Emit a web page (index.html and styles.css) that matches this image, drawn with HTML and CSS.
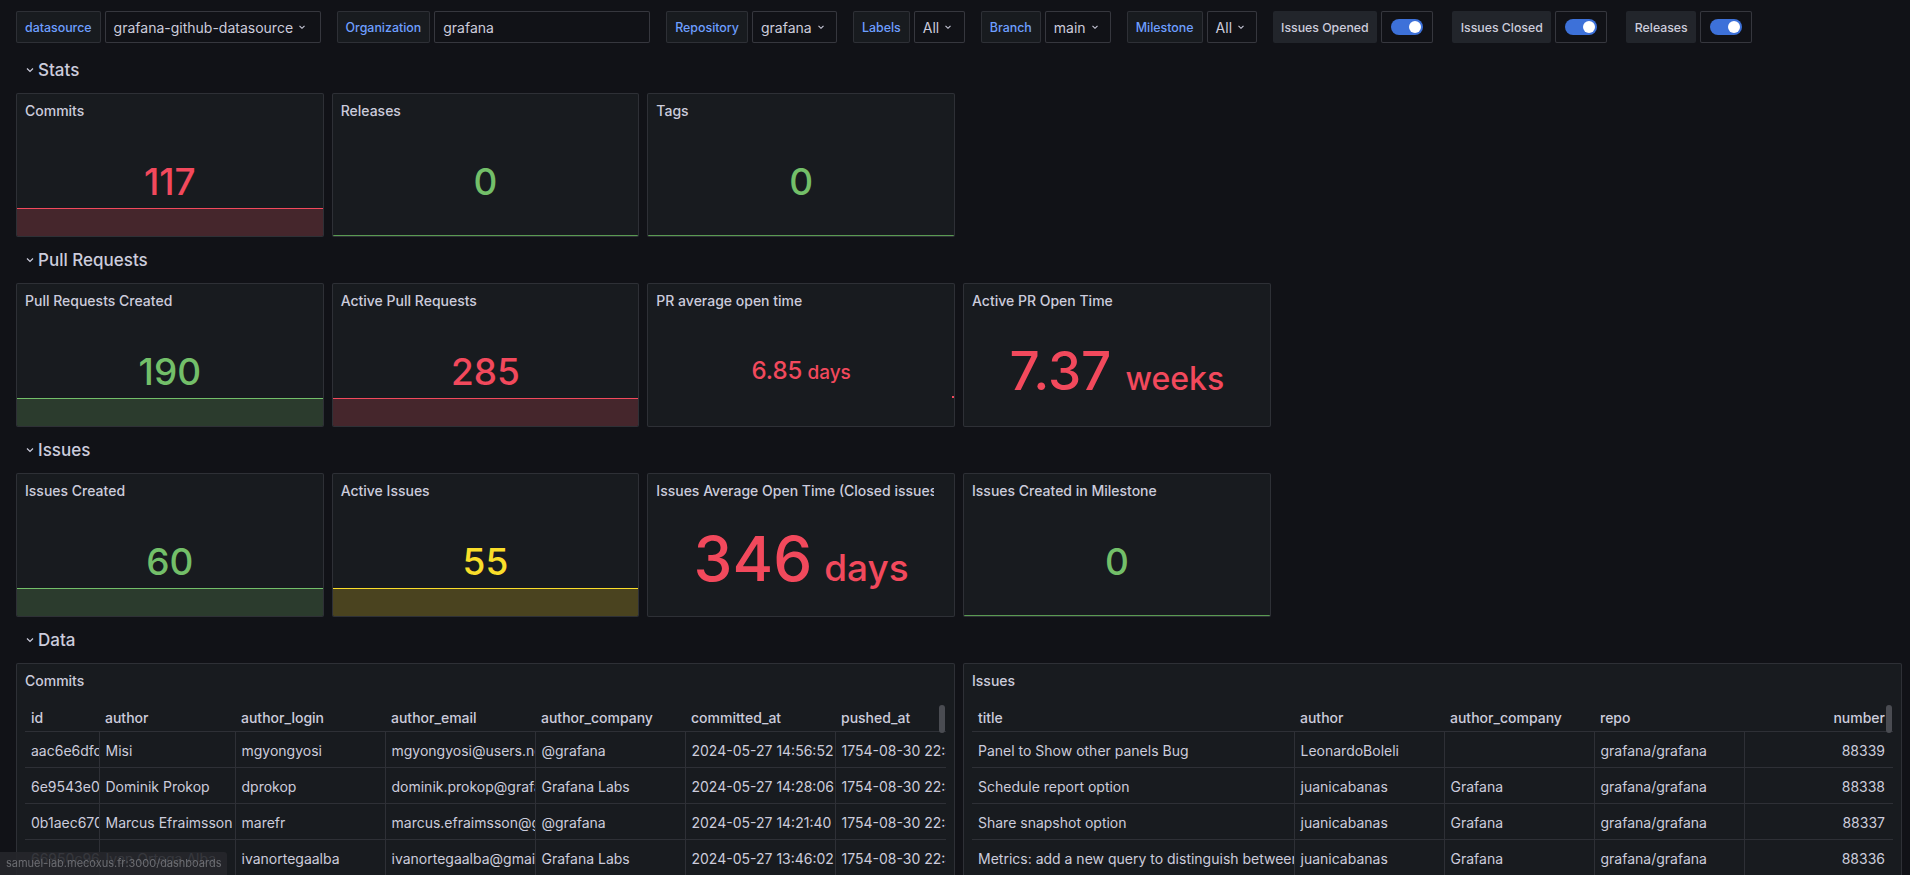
FILE: index.html
```html
<!DOCTYPE html>
<html>
<head>
<meta charset="utf-8">
<link rel="stylesheet" href="styles.css">
</head>
<body>
<div class="vars">
  <div class="vgroup"><span class="vlabel">datasource</span><span class="vselect w-ds">grafana-github-datasource<svg class="chev" viewBox="0 0 10 10"><path d="M2.5 3.8 L5 6.3 L7.5 3.8"/></svg></span></div>
  <div class="vgroup"><span class="vlabel">Organization</span><span class="vinput w-org">grafana</span></div>
  <div class="vgroup"><span class="vlabel">Repository</span><span class="vselect w-repo">grafana<svg class="chev" viewBox="0 0 10 10"><path d="M2.5 3.8 L5 6.3 L7.5 3.8"/></svg></span></div>
  <div class="vgroup"><span class="vlabel">Labels</span><span class="vselect w-all">All<svg class="chev" viewBox="0 0 10 10"><path d="M2.5 3.8 L5 6.3 L7.5 3.8"/></svg></span></div>
  <div class="vgroup"><span class="vlabel">Branch</span><span class="vselect w-main">main<svg class="chev" viewBox="0 0 10 10"><path d="M2.5 3.8 L5 6.3 L7.5 3.8"/></svg></span></div>
  <div class="vgroup"><span class="vlabel">Milestone</span><span class="vselect w-all2">All<svg class="chev" viewBox="0 0 10 10"><path d="M2.5 3.8 L5 6.3 L7.5 3.8"/></svg></span></div>
  <div class="vgroup"><span class="vlabel plain">Issues Opened</span><span class="vtoggle"><span class="sw"></span></span></div>
  <div class="vgroup tg"><span class="vlabel plain">Issues Closed</span><span class="vtoggle"><span class="sw"></span></span></div>
  <div class="vgroup tg"><span class="vlabel plain">Releases</span><span class="vtoggle"><span class="sw"></span></span></div>
</div>

<div class="dash">
  <div class="rowh"><svg class="rchev" viewBox="0 0 12 12"><path d="M3 4.5 L6 7.5 L9 4.5"/></svg><span>Stats</span></div>
  <div class="grid6">
    <div class="panel stat">
      <div class="ptitle">Commits</div>
      <div class="sbody"><div class="spark red"></div><div class="sval red">117</div></div>
    </div>
    <div class="panel stat">
      <div class="ptitle">Releases</div>
      <div class="sbody"><div class="spark line green"></div><div class="sval green">0</div></div>
    </div>
    <div class="panel stat">
      <div class="ptitle">Tags</div>
      <div class="sbody"><div class="spark line green"></div><div class="sval green">0</div></div>
    </div>
  </div>

  <div class="rowh"><svg class="rchev" viewBox="0 0 12 12"><path d="M3 4.5 L6 7.5 L9 4.5"/></svg><span>Pull Requests</span></div>
  <div class="grid6">
    <div class="panel stat">
      <div class="ptitle">Pull Requests Created</div>
      <div class="sbody"><div class="spark green"></div><div class="sval green">190</div></div>
    </div>
    <div class="panel stat">
      <div class="ptitle">Active Pull Requests</div>
      <div class="sbody"><div class="spark red"></div><div class="sval red">285</div></div>
    </div>
    <div class="panel stat">
      <div class="ptitle">PR average open time</div>
      <div class="sbody"><div class="dot"></div><div class="sval red small">6.85<span class="unit">days</span></div></div>
    </div>
    <div class="panel stat">
      <div class="ptitle">Active PR Open Time</div>
      <div class="sbody"><div class="sval red big">7.37<span class="unit">weeks</span></div></div>
    </div>
  </div>

  <div class="rowh"><svg class="rchev" viewBox="0 0 12 12"><path d="M3 4.5 L6 7.5 L9 4.5"/></svg><span>Issues</span></div>
  <div class="grid6">
    <div class="panel stat">
      <div class="ptitle">Issues Created</div>
      <div class="sbody"><div class="spark green"></div><div class="sval green">60</div></div>
    </div>
    <div class="panel stat">
      <div class="ptitle">Active Issues</div>
      <div class="sbody"><div class="spark yellow"></div><div class="sval yellow">55</div></div>
    </div>
    <div class="panel stat">
      <div class="ptitle clip">Issues Average Open Time (Closed issues)</div>
      <div class="sbody"><div class="sval red huge">346<span class="unit">days</span></div></div>
    </div>
    <div class="panel stat">
      <div class="ptitle">Issues Created in Milestone</div>
      <div class="sbody"><div class="spark line green"></div><div class="sval green">0</div></div>
    </div>
  </div>

  <div class="rowh"><svg class="rchev" viewBox="0 0 12 12"><path d="M3 4.5 L6 7.5 L9 4.5"/></svg><span>Data</span></div>
  <div class="grid2">
    <div class="panel tpanel">
      <div class="ptitle">Commits</div>
      <div class="twrap">
        <div class="thumb"></div>
        <table class="tbl commits">
          <colgroup><col style="width:74px"><col style="width:136px"><col style="width:150px"><col style="width:150px"><col style="width:150px"><col style="width:150px"><col></colgroup>
          <thead><tr><th>id</th><th>author</th><th>author_login</th><th>author_email</th><th>author_company</th><th>committed_at</th><th>pushed_at</th></tr></thead>
          <tbody>
            <tr><td>aac6e6dfc0a1</td><td>Misi</td><td>mgyongyosi</td><td>mgyongyosi@users.noreply.github.com</td><td>@grafana</td><td>2024-05-27 14:56:52</td><td>1754-08-30 22:43:41</td></tr>
            <tr><td>6e9543e0b7c2</td><td>Dominik Prokop</td><td>dprokop</td><td>dominik.prokop@grafana.com</td><td>Grafana Labs</td><td>2024-05-27 14:28:06</td><td>1754-08-30 22:43:41</td></tr>
            <tr><td>0b1aec670d3e</td><td>Marcus Efraimsson</td><td>marefr</td><td>marcus.efraimsson@gmail.com</td><td>@grafana</td><td>2024-05-27 14:21:40</td><td>1754-08-30 22:43:41</td></tr>
            <tr><td>66950c96a2f4</td><td>Ivan Ortega Alba</td><td>ivanortegaalba</td><td>ivanortegaalba@gmail.com</td><td>Grafana Labs</td><td>2024-05-27 13:46:02</td><td>1754-08-30 22:43:41</td></tr>
          </tbody>
        </table>
      </div>
    </div>
    <div class="panel tpanel">
      <div class="ptitle">Issues</div>
      <div class="twrap">
        <div class="thumb"></div>
        <table class="tbl issues">
          <colgroup><col style="width:322px"><col style="width:150px"><col style="width:150px"><col style="width:150px"><col></colgroup>
          <thead><tr><th>title</th><th>author</th><th>author_company</th><th>repo</th><th class="num">number</th></tr></thead>
          <tbody>
            <tr><td>Panel to Show other panels Bug</td><td>LeonardoBoleli</td><td></td><td>grafana/grafana</td><td class="num">88339</td></tr>
            <tr><td>Schedule report option</td><td>juanicabanas</td><td>Grafana</td><td>grafana/grafana</td><td class="num">88338</td></tr>
            <tr><td>Share snapshot option</td><td>juanicabanas</td><td>Grafana</td><td>grafana/grafana</td><td class="num">88337</td></tr>
            <tr><td>Metrics: add a new query to distinguish between</td><td>juanicabanas</td><td>Grafana</td><td>grafana/grafana</td><td class="num">88336</td></tr>
          </tbody>
        </table>
      </div>
    </div>
  </div>
</div>
<div class="status">samuel-lab.mecoxus.fr:3000/dashboards</div>
</body>
</html>
```

FILE: styles.css
```css
html, body {
  margin: 0;
  padding: 0;
  height: 100%;
  overflow: hidden;
  background: #111217;
  color: #ccccdc;
  font-family: Inter, "Noto Sans", "Liberation Sans", sans-serif;
  font-size: 14px;
}

.vars {
  display: flex;
  align-items: center;
  gap: 16px;
  padding: 11px 16px 0 16px;
  height: 32px;
}
.vgroup {
  display: flex;
  gap: 4px;
  height: 32px;
}
.vgroup.tg { margin-left: 3px; }
.vlabel {
  display: flex;
  align-items: center;
  box-sizing: border-box;
  height: 32px;
  padding: 0 8px;
  background: #181b1f;
  border: 1px solid rgba(204, 204, 220, 0.12);
  border-radius: 2px;
  color: #6e9fff;
  font-size: 12.4px;
  font-weight: 500;
  white-space: nowrap;
}
.vlabel.plain {
  background: #22252b;
  border: none;
  color: #ccccdc;
  font-size: 12.3px;
  padding: 0 8.5px;
}
.vselect, .vinput {
  display: flex;
  align-items: center;
  box-sizing: border-box;
  height: 32px;
  padding: 0 8px;
  background: #111217;
  border: 1px solid rgba(204, 204, 220, 0.2);
  border-radius: 2px;
  color: #ccccdc;
  font-size: 14px;
  white-space: nowrap;
}
.vselect { gap: 4px; }
.chev { width: 10px; height: 10px; }
.chev path { fill: none; stroke: #ccccdc; stroke-width: 1.1; }
.w-ds { width: 216px; }
.w-org { width: 216px; }
.w-repo { width: 85px; }
.w-all { width: 51px; }
.w-main { width: 66px; }
.w-all2 { width: 50px; }
.vtoggle {
  display: flex;
  align-items: center;
  justify-content: center;
  box-sizing: border-box;
  width: 52px;
  height: 32px;
  background: #111217;
  border: 1px solid rgba(204, 204, 220, 0.2);
  border-radius: 2px;
}
.sw {
  position: relative;
  width: 32px;
  height: 16px;
  border-radius: 8px;
  background: #3d71d9;
}
.sw::after {
  content: "";
  position: absolute;
  right: 2px;
  top: 2px;
  width: 12px;
  height: 12px;
  border-radius: 50%;
  background: #ffffff;
}

.dash {
  display: flex;
  flex-direction: column;
  gap: 8px;
  padding: 12px 8px 0 16px;
}
.rowh {
  display: flex;
  align-items: center;
  height: 30px;
  padding-left: 8px;
  gap: 2px;
  font-size: 17px;
  font-weight: 500;
  color: #ccccdc;
}
.rchev { width: 12px; height: 12px; }
.rchev path { fill: none; stroke: #ccccdc; stroke-width: 1.2; }

.grid6 {
  display: grid;
  grid-template-columns: repeat(6, 1fr);
  gap: 8px;
}
.grid2 {
  display: grid;
  grid-template-columns: repeat(2, 1fr);
  gap: 8px;
}
.panel {
  box-sizing: border-box;
  background: #181b1f;
  border: 1px solid rgba(204, 204, 220, 0.12);
  border-radius: 2px;
  display: flex;
  flex-direction: column;
  overflow: hidden;
}
.stat { height: 144px; }
.ptitle {
  height: 32px;
  flex: none;
  display: flex;
  align-items: center;
  padding: 0 8px;
  font-size: 14px;
  font-weight: 500;
  color: #ccccdc;
  white-space: nowrap;
  overflow: hidden;
}
.ptitle.clip { margin-right: 20px; }
.sbody {
  position: relative;
  flex: 1;
  display: flex;
  align-items: center;
  justify-content: center;
}
.sval {
  position: relative;
  font-size: 37px;
  font-weight: 500;
  line-height: 1;
  white-space: nowrap;
}
.sval.small { font-size: 24px; }
.sval.small .unit { font-size: 19px; margin-left: 5px; }
.sval.big { font-size: 53px; }
.sval.big .unit { font-size: 32px; margin-left: 14px; }
.sval.huge { font-size: 62px; margin-top: -5px; }
.sval.huge .unit { font-size: 37px; margin-left: 12px; }
.red { color: #f2495c; }
.green { color: #73bf69; }
.yellow { color: #fade2a; }

.spark {
  position: absolute;
  left: 0;
  right: 0;
  bottom: 0;
  height: 27px;
  border-top: 1px solid currentColor;
}
.spark.red { background: #45262c; }
.spark.green { background: #2b3b2d; }
.spark.yellow { background: #4a431f; }
.spark.line { height: 0; background: none; border-top-color: #5a9a52; }
.dot {
  position: absolute;
  right: 0;
  bottom: 28px;
  width: 2px;
  height: 2px;
  background: #f2495c;
}

.tpanel { height: 420px; }
.twrap {
  position: relative;
  padding: 0 8px;
}
.thumb {
  position: absolute;
  right: 9px;
  top: 9px;
  width: 6px;
  height: 28px;
  border-radius: 3px;
  background: #4a4c52;
}
.tbl {
  width: 100%;
  table-layout: fixed;
  border-collapse: collapse;
  font-size: 14px;
  color: #ccccdc;
}
.tbl th, .tbl td {
  height: 33px;
  padding: 2px 6px 0 6px;
  text-align: left;
  white-space: nowrap;
  overflow: hidden;
  text-overflow: clip;
  border-bottom: 1px solid rgba(204, 204, 220, 0.12);
}
.tbl th {
  font-weight: 500;
  height: 27px;
  padding-top: 8px;
}
.tbl td + td { border-left: 1px solid rgba(204, 204, 220, 0.12); }
.tbl .num { text-align: right; padding-right: 8px; }

.status {
  position: fixed;
  left: 0;
  bottom: 0;
  padding: 4px 6px 5px 6px;
  background: rgba(38, 39, 43, 0.9);
  color: #6c6d72;
  font-size: 11px;
  border-top-right-radius: 3px;
}
```
